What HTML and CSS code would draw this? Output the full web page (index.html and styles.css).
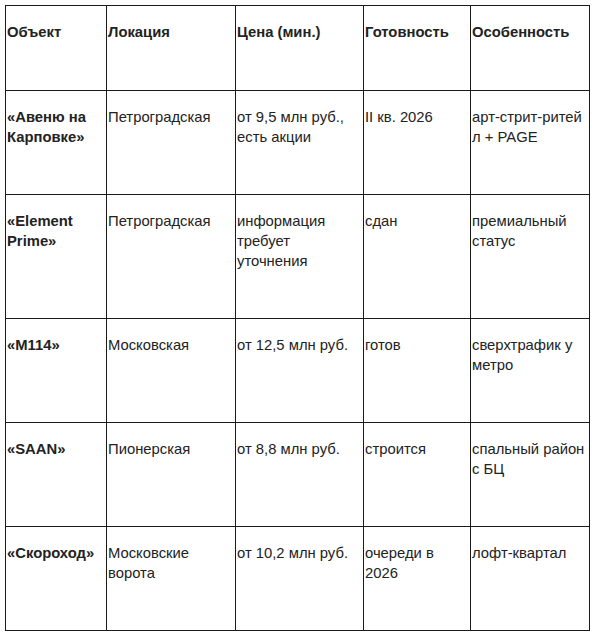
FILE: index.html
```html
<!DOCTYPE html>
<html lang="ru">
<head>
<meta charset="utf-8">
<link rel="stylesheet" href="styles.css">
</head>
<body>
<table class="grid">
  <colgroup>
    <col class="c1"><col class="c2"><col class="c3"><col class="c4"><col class="c5">
  </colgroup>
  <thead>
    <tr>
      <th>Объект</th>
      <th>Локация</th>
      <th>Цена (мин.)</th>
      <th>Готовность</th>
      <th>Особенность</th>
    </tr>
  </thead>
  <tbody>
    <tr>
      <td><b>«Авеню на Карповке»</b></td>
      <td>Петроградская</td>
      <td>от 9,5 млн руб., есть акции</td>
      <td>II кв. 2026</td>
      <td>арт-&#8288;стрит-&#8288;ритейл + PAGE</td>
    </tr>
    <tr>
      <td><b>«Element Prime»</b></td>
      <td>Петроградская</td>
      <td>информация требует уточнения</td>
      <td>сдан</td>
      <td>премиальный статус</td>
    </tr>
    <tr>
      <td><b>«М114»</b></td>
      <td>Московская</td>
      <td>от 12,5 млн руб.</td>
      <td>готов</td>
      <td>сверхтрафик у метро</td>
    </tr>
    <tr>
      <td><b>«SAAN»</b></td>
      <td>Пионерская</td>
      <td>от 8,8 млн руб.</td>
      <td>строится</td>
      <td>спальный район с БЦ</td>
    </tr>
    <tr>
      <td><b>«Скороход»</b></td>
      <td>Московские ворота</td>
      <td>от 10,2 млн руб.</td>
      <td>очереди в 2026</td>
      <td>лофт-квартал</td>
    </tr>
  </tbody>
</table>
</body>
</html>
```

FILE: styles.css
```css
html, body {
  margin: 0;
  background: #ffffff;
}
body {
  padding: 5px;
  font-family: "Liberation Sans", Arial, sans-serif;
  font-size: 14.8px;
  line-height: 20px;
  color: #222222;
}
.grid {
  border-collapse: collapse;
  table-layout: fixed;
  width: 584px;
}
.c1 { width: 101px; }
.c2 { width: 129px; }
.c3 { width: 128px; }
.c4 { width: 107px; }
.c5 { width: 119px; }
.grid th,
.grid td {
  border: 1px solid #1a1a1a;
  padding: 16px 2px 47px 1px;
  text-align: left;
  vertical-align: top;
  overflow-wrap: break-word;
}
.grid th {
  font-weight: bold;
  padding-bottom: 48px;
}
.grid td b {
  font-weight: bold;
}
```
